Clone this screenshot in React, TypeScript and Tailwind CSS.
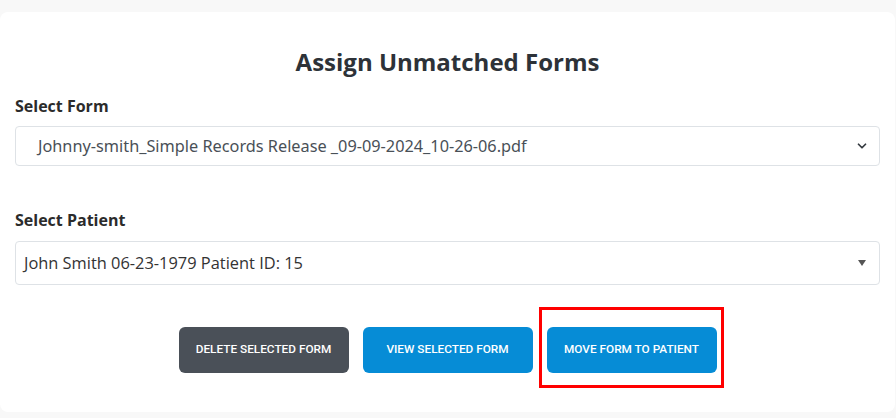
import { ChevronDown } from "lucide-react";

export default function App() {
  return (
    <div className="w-[896px] h-[418px] bg-[#f8f8f8] pt-[12px] font-['Open_Sans',sans-serif]">
      <div className="w-[895px] h-[400px] bg-white rounded-lg px-[15px] pt-[34px]">
        <h2 className="text-center text-[24px] leading-[32px] font-bold text-[#2d3238]">
          Assign Unmatched Forms
        </h2>

        <label className="block mt-[16px] text-[16px] leading-[24px] font-bold text-[#2b2b2b]">Select Form</label>
        <div className="mt-[8px] h-[40px] border border-[#dee2e6] rounded-[4px] flex items-center justify-between pl-[22px] pr-[10px]">
          <span className="text-[16.3px] text-[#495057] font-['Noto_Sans',sans-serif]">
            Johnny-smith_Simple Records Release _09-09-2024_10-26-06.pdf
          </span>
          <ChevronDown size={14} strokeWidth={3} className="text-[#343a40]" />
        </div>

        <label className="block mt-[42px] text-[16px] leading-[24px] font-bold text-[#2b2b2b]">Select Patient</label>
        <div className="mt-[9px] h-[44px] border border-[#dee2e6] rounded-[4px] flex items-center justify-between pl-[8px] pr-[12px]">
          <span className="text-[16.4px] text-[#333]">John Smith 06-23-1979 Patient ID: 15</span>
          <svg width="8" height="6" viewBox="0 0 8 6" className="mr-[1px]">
            <path d="M0 0 H8 L4 6 Z" fill="#555" />
          </svg>
        </div>

        <div className="mt-[42px] flex justify-center gap-[14px] font-['Roboto',sans-serif]">
          <button className="w-[170px] h-[46px] rounded-[6px] bg-[#4a5058] text-white text-[11.8px] font-medium uppercase">
            Delete Selected Form
          </button>
          <button className="w-[170px] h-[46px] rounded-[6px] bg-[#068cd6] text-white text-[11.8px] font-medium uppercase">
            View Selected Form
          </button>
          <div className="relative">
            <button className="w-[170px] h-[46px] rounded-[6px] bg-[#068cd6] text-white text-[11.8px] font-medium uppercase">
              Move Form to Patient
            </button>
            <div className="absolute left-[-8px] top-[-20px] w-[185px] h-[81px] border-[3px] border-[#ff0000]" />
          </div>
        </div>
      </div>
    </div>
  );
}
